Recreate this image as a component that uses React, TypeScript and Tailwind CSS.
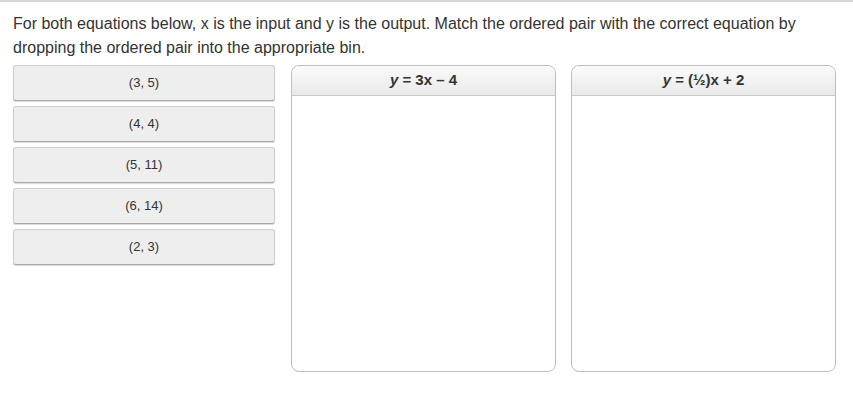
const pairs = ["(3, 5)", "(4, 4)", "(5, 11)", "(6, 14)", "(2, 3)"];

function Bin({ children }: { children: React.ReactNode }) {
  return (
    <div className="flex h-[307px] w-[265px] flex-col rounded-[8px] border border-[#bdbdbd] bg-white">
      <div className="flex h-[30px] items-center justify-center rounded-t-[8px] border-b border-[#c8c8c8] bg-gradient-to-b from-[#fbfbfb] to-[#e9e9e9] text-[15px] font-bold text-[#333]">
        {children}
      </div>
      <div className="flex-1" />
    </div>
  );
}

export default function App() {
  return (
    <div className="h-[416px] w-[853px] border-t-2 border-[#d6d6d6] bg-white font-['Liberation_Sans',Arial,sans-serif] text-[#333]">
      <p className="px-[13px] pt-[10px] text-[16px] leading-[24px]">
        For both equations below, x is the input and y is the output. Match the ordered pair with the correct equation by
        dropping the ordered pair into the appropriate bin.
      </p>
      <div className="mt-[5px] flex items-start pl-[13px]">
        <div className="flex w-[262px] flex-col gap-[5px]">
          {pairs.map((pair) => (
            <div
              key={pair}
              className="flex h-[36px] items-center justify-center rounded-[3px] border border-[#cfcfcf] border-b-[#a9a9a9] bg-[#eeeeee] text-[13px] text-[#333] shadow-[0_1px_1px_rgba(0,0,0,0.15)]"
            >
              {pair}
            </div>
          ))}
        </div>
        <div className="ml-[16px] flex gap-[15px]">
          <Bin>
            <span>
              <i>y</i> = 3x – 4
            </span>
          </Bin>
          <Bin>
            <span>
              <i>y</i> = (½)x + 2
            </span>
          </Bin>
        </div>
      </div>
    </div>
  );
}
